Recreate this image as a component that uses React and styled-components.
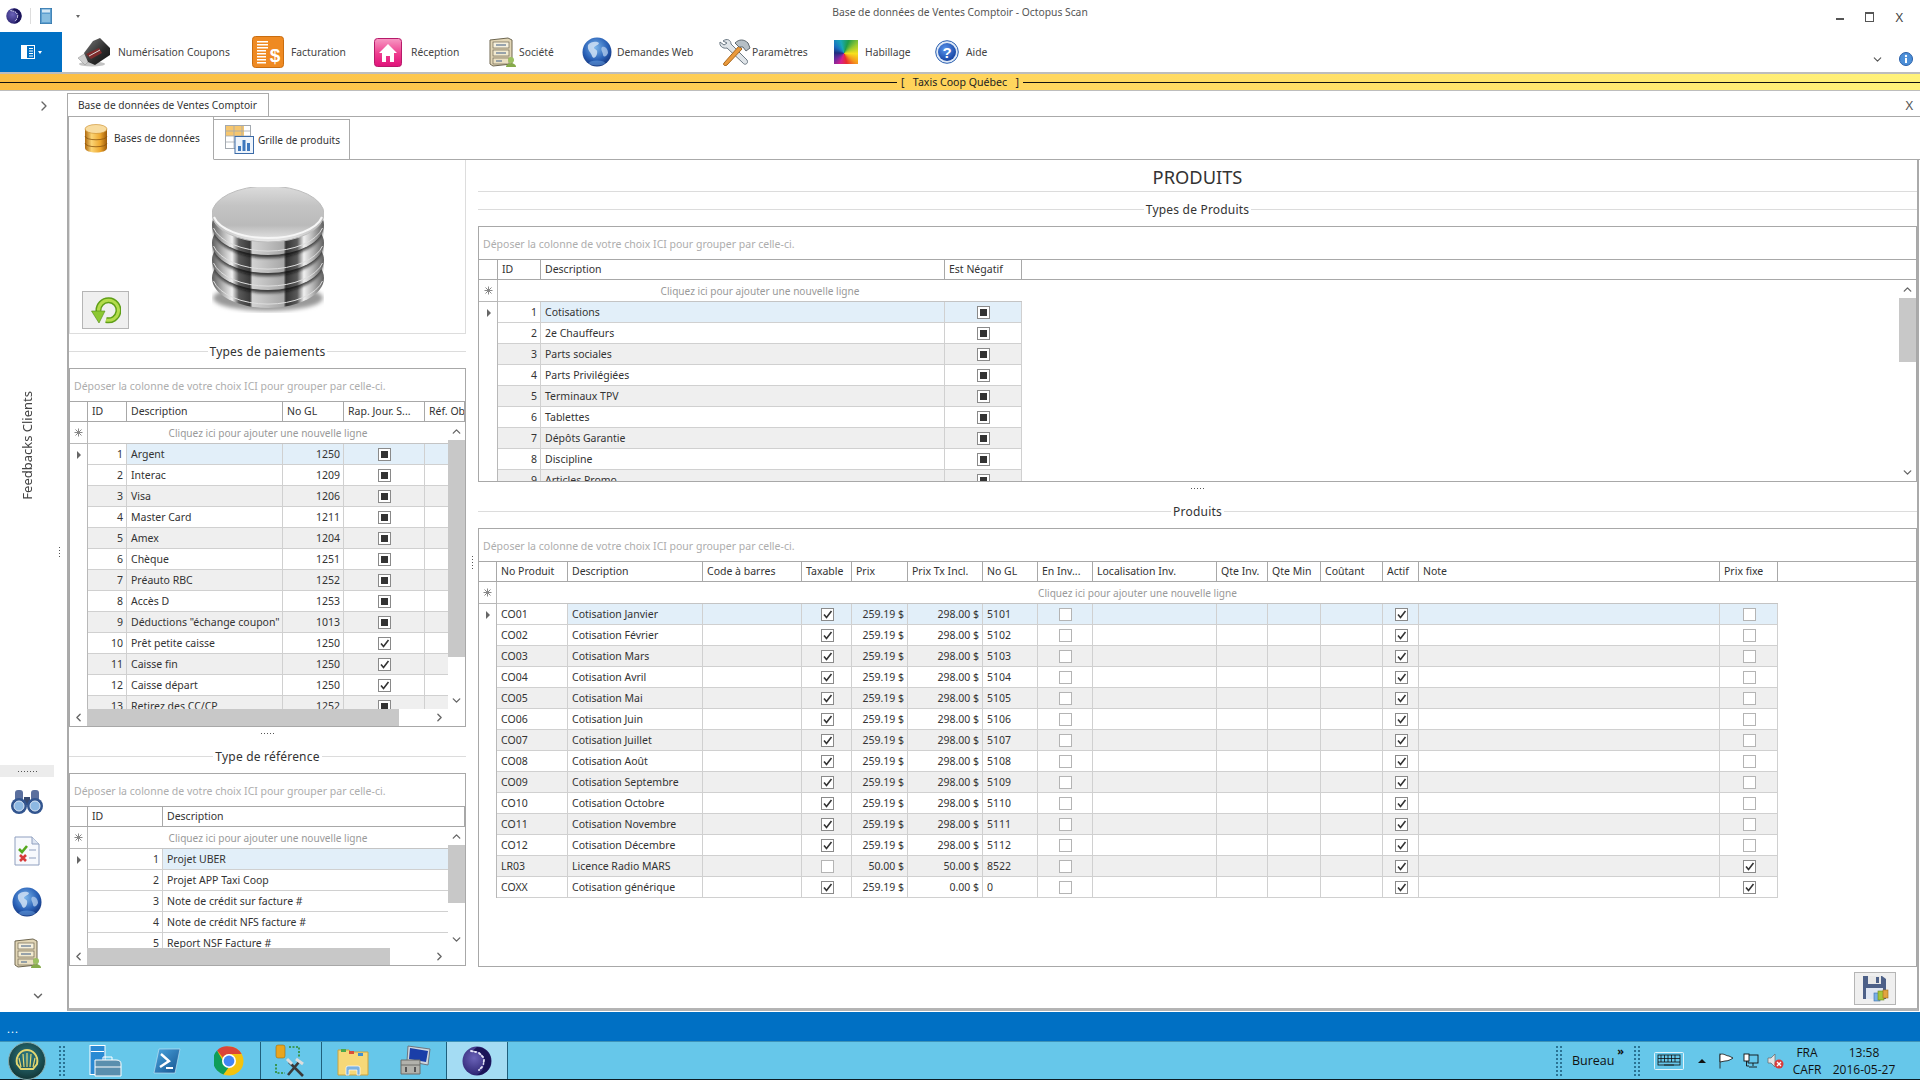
import styled, { createGlobalStyle } from 'styled-components';
import { ChevronUp, ChevronDown, ChevronLeft, ChevronRight } from 'lucide-react';

const GlobalStyle = createGlobalStyle`
  * { box-sizing: border-box; }
  html, body { margin: 0; padding: 0; background: #fff; overflow: hidden; }
  body { font-family: "Noto Sans", "Liberation Sans", sans-serif; font-size: 10.5px; color: #333; }
`;

/* ---------- icons ---------- */

function OctopusIcon({ size = 16 }) {
  return (
    <svg width={size} height={size} viewBox="0 0 30 30">
      <defs>
        <radialGradient id="octo" cx="0.4" cy="0.4" r="0.7">
          <stop offset="0" stopColor="#6a62b8" />
          <stop offset="1" stopColor="#221a66" />
        </radialGradient>
      </defs>
      <circle cx="15" cy="15" r="14.5" fill="url(#octo)" />
      <path d="M15 1 A14 14 0 0 1 15 29 A14 14 0 0 0 22 15 A9 9 0 0 0 9 6 Z" fill="#1a1458" />
      <path d="M9 5 L14 6 M17 7 L21 11 M22 14 L21.5 18 M20 21 L17 24" stroke="#e4e4f6" strokeWidth="1.8" strokeLinecap="round" strokeDasharray="2 2" />
    </svg>
  );
}

function DocIcon() {
  return (
    <svg width="12" height="16" viewBox="0 0 12 16">
      <rect width="12" height="16" fill="#5d9fd0" stroke="#2a6a9e" />
      <rect x="2" y="1.5" width="8" height="3" fill="#d6e8f4" />
      <rect x="2" y="6" width="8" height="8" fill="#88bddf" />
    </svg>
  );
}

function MenuIcon() {
  return (
    <svg width="14" height="14" viewBox="0 0 14 14">
      <rect x="0.5" y="0.5" width="13" height="13" fill="#0070c4" stroke="#fff" />
      <rect x="1" y="1" width="5" height="12" fill="#fff" />
      <path d="M8 3.5 H12 M8 6 H12 M8 8.5 H12 M8 11 H12" stroke="#fff" strokeWidth="1" />
    </svg>
  );
}

function ScannerIcon() {
  return (
    <svg width="32" height="29" viewBox="0 0 32 29">
      <defs>
        <linearGradient id="scanBody" x1="0" y1="0" x2="1" y2="1">
          <stop offset="0" stopColor="#7a7a7a" />
          <stop offset="0.6" stopColor="#2a2a2a" />
          <stop offset="1" stopColor="#101010" />
        </linearGradient>
      </defs>
      <ellipse cx="14" cy="26" rx="13" ry="2.6" fill="#c4c4c4" />
      <path d="M0 20 L9 14 L14 20 L7 27 Z" fill="#cfcfcf" stroke="#8c8c8c" strokeWidth="0.5" />
      <path d="M6 15 L15 3 L22 0 L32 10 L32 17 L17 27 L10 24 Z" fill="url(#scanBody)" />
      <path d="M8 16 L21 10 L24 15 L13 21 Z" fill="#7e2b2c" />
      <path d="M11 18 L22 12" stroke="#d8d8d8" strokeWidth="1" />
    </svg>
  );
}

function InvoiceIcon() {
  return (
    <svg width="32" height="32" viewBox="0 0 32 32">
      <rect x="0.5" y="0.5" width="31" height="31" rx="3" fill="#ef8a22" stroke="#c96d10" />
      {[5, 8, 11, 14, 17, 20, 23, 26].map(y => (
        <rect key={y} x="5" y={y} width={y > 13 ? 9 : 11} height="1.5" fill="#fff" />
      ))}
      <text x="23" y="26" fontSize="19" fontWeight="700" fontFamily="Liberation Sans, sans-serif" fill="#fff" textAnchor="middle">$</text>
    </svg>
  );
}

function HouseIcon() {
  return (
    <svg width="28" height="29" viewBox="0 0 28 29">
      <defs>
        <linearGradient id="pink" x1="0" y1="0" x2="0" y2="1">
          <stop offset="0" stopColor="#f79ac4" />
          <stop offset="0.55" stopColor="#ee3c8e" />
          <stop offset="1" stopColor="#e0127a" />
        </linearGradient>
      </defs>
      <rect x="0.5" y="0.5" width="27" height="28" rx="3" fill="url(#pink)" stroke="#b61a6a" />
      <path d="M14 6 L23 15 L20 15 L20 24 L16 24 L16 18 L12 18 L12 24 L8 24 L8 15 L5 15 Z" fill="#fff" />
    </svg>
  );
}

function CabinetIcon({ width = 28, height = 30 }) {
  return (
    <svg width={width} height={height} viewBox="0 0 28 30">
      <path d="M2 3 L20 1 L24 3 L24 27 L5 29 L2 27 Z" fill="#e2d6b6" stroke="#6e6650" />
      <rect x="5" y="5" width="16" height="6" fill="#f6f0dc" stroke="#6e6650" strokeWidth="0.7" />
      <rect x="5" y="13" width="16" height="6" fill="#f2eacf" stroke="#6e6650" strokeWidth="0.7" />
      <rect x="5" y="21" width="16" height="6" fill="#ebe0c2" stroke="#6e6650" strokeWidth="0.7" />
      <path d="M8 8 H18 M8 16 H18 M8 24 H14" stroke="#7a8a9e" strokeWidth="1.6" />
      <circle cx="23" cy="23" r="3" fill="#9cc060" />
      <path d="M18 30 C18 25 28 25 28 30 Z" fill="#86ab4a" />
    </svg>
  );
}

function GlobeIcon({ size = 30 }) {
  return (
    <svg width={size} height={size} viewBox="0 0 30 30">
      <defs>
        <radialGradient id="globe" cx="0.45" cy="0.35" r="0.75">
          <stop offset="0" stopColor="#7bb5ea" />
          <stop offset="0.55" stopColor="#2a62b8" />
          <stop offset="1" stopColor="#0c2468" />
        </radialGradient>
      </defs>
      <circle cx="15" cy="15" r="14.5" fill="url(#globe)" />
      <path d="M6 8 C9 4 15 4 17 6 C16 9 13 8 12 11 C14 13 16 13 15 17 C14 21 11 22 10 19 C9 15 5 14 6 8 Z" fill="#cfe0f5" opacity="0.85" />
      <path d="M20 10 C23 9 26 12 26 16 C25 19 22 21 21 18 C21 15 18 13 20 10 Z" fill="#b5cfee" opacity="0.75" />
      <ellipse cx="15" cy="26" rx="8" ry="2.5" fill="#6da8e8" opacity="0.5" />
    </svg>
  );
}

function ToolsIcon() {
  return (
    <svg width="32" height="28" viewBox="0 0 32 28">
      <path d="M4 3 C8 0 12 2 12 6 L28 22 C30 25 26 28 24 25 L8 10 C4 11 0 8 1 4 L5 7 L8 5 Z" fill="#dfe4e8" stroke="#6b7883" />
      <path d="M5 25 L20 8 L23 11 L8 27 C6 28.5 3.5 27 5 25 Z" fill="#ea9a3c" stroke="#a8661c" />
      <path d="M16 5 C20 1 25 1 29 5 L31 10 L27 13 L24 9 L20 9 Z" fill="#b5bfc6" stroke="#5d6870" />
    </svg>
  );
}

const PaletteIcon = styled.div`
  width: 24px;
  height: 24px;
  background: conic-gradient(from 20deg at 42% 55%, #1f9c4a, #9ac92e, #f7e01c, #f59a1c, #e92e2e, #d81f8c, #6a2a9e, #1f2f7e, #1a6fc0, #18a8b8, #1f9c4a);
`;

function HelpIcon() {
  return (
    <svg width="24" height="24" viewBox="0 0 24 24">
      <defs>
        <radialGradient id="help" cx="0.4" cy="0.35" r="0.7">
          <stop offset="0" stopColor="#5a96ee" />
          <stop offset="1" stopColor="#123f9e" />
        </radialGradient>
      </defs>
      <circle cx="12" cy="12" r="11.3" fill="#dfe9f6" stroke="#2a5fb0" />
      <circle cx="12" cy="12" r="9" fill="url(#help)" />
      <text x="12" y="17.5" fontSize="15" fontWeight="700" fontFamily="Liberation Sans, sans-serif" fill="#fff" textAnchor="middle">?</text>
    </svg>
  );
}

function InfoIcon() {
  return (
    <svg width="14" height="14" viewBox="0 0 14 14">
      <circle cx="7" cy="7" r="6.5" fill="#4c8fd8" stroke="#2a5fa8" />
      <circle cx="7" cy="4" r="1.2" fill="#fff" />
      <rect x="6" y="6" width="2" height="5" fill="#fff" />
    </svg>
  );
}

function GoldDbIcon() {
  return (
    <svg width="24" height="29" viewBox="0 0 24 29">
      <defs>
        <linearGradient id="gold" x1="0" y1="0" x2="1" y2="0">
          <stop offset="0" stopColor="#b06a10" />
          <stop offset="0.3" stopColor="#fbd474" />
          <stop offset="0.7" stopColor="#eda62c" />
          <stop offset="1" stopColor="#9c5a0a" />
        </linearGradient>
      </defs>
      <path d="M1 5 V24 C1 30 23 30 23 24 V5 Z" fill="url(#gold)" />
      <ellipse cx="12" cy="5" rx="11" ry="4.5" fill="#f8dca0" stroke="#c98a24" strokeWidth="0.6" />
      <path d="M1 12 C1 17 23 17 23 12 M1 19 C1 24 23 24 23 19" fill="none" stroke="#8a540e" strokeWidth="0.8" />
    </svg>
  );
}

function GridChartIcon() {
  return (
    <svg width="29" height="29" viewBox="0 0 29 29">
      <rect x="0.5" y="0.5" width="25" height="23" fill="#fff" stroke="#a3a9b0" />
      <rect x="1" y="1" width="18" height="10" fill="#f6c66e" />
      <path d="M1 6 H25 M1 11 H25 M1 17 H25 M9 1 V23 M17 1 V23" stroke="#a3a9b0" strokeWidth="0.8" />
      <rect x="10" y="11.5" width="18.5" height="17" fill="#eef4fb" stroke="#3b6ba8" />
      <rect x="13" y="21" width="3" height="5" fill="#3f78bd" />
      <rect x="17.5" y="15" width="3" height="11" fill="#3f78bd" />
      <rect x="22" y="18" width="3" height="8" fill="#3f78bd" />
    </svg>
  );
}

function LargeDbIcon() {
  const bands = [91, 73, 56, 38];
  return (
    <svg width="112" height="126" viewBox="0 0 112 126">
      <defs>
        <linearGradient id="metal" x1="0" y1="0" x2="1" y2="0">
          <stop offset="0" stopColor="#5e5e5e" />
          <stop offset="0.1" stopColor="#b4b4b4" />
          <stop offset="0.18" stopColor="#f0f0f0" />
          <stop offset="0.24" stopColor="#5a5a5a" />
          <stop offset="0.34" stopColor="#3a3a3a" />
          <stop offset="0.36" stopColor="#d2d2d2" />
          <stop offset="0.64" stopColor="#a8a8a8" />
          <stop offset="0.66" stopColor="#343434" />
          <stop offset="0.76" stopColor="#5a5a5a" />
          <stop offset="0.82" stopColor="#f0f0f0" />
          <stop offset="0.9" stopColor="#b4b4b4" />
          <stop offset="1" stopColor="#5e5e5e" />
        </linearGradient>
        <linearGradient id="lens" x1="0" y1="0" x2="0" y2="1">
          <stop offset="0" stopColor="#dcdcdc" />
          <stop offset="0.35" stopColor="#c4c4c4" />
          <stop offset="0.7" stopColor="#bababa" />
          <stop offset="1" stopColor="#eaeaea" />
        </linearGradient>
        <filter id="dbBlur"><feGaussianBlur stdDeviation="2" /></filter>
        <filter id="dbEdge"><feGaussianBlur stdDeviation="1.4" /></filter>
      </defs>
      <ellipse cx="56" cy="111" rx="55" ry="13" fill="#999" filter="url(#dbBlur)" />
      {bands.map((c, i) => (
        <g key={c}>
          <ellipse cx="56" cy={c} rx="56" ry="30" fill="url(#metal)" />
          <path d={`M1.5 ${c + 3} A56 30 0 0 0 110.5 ${c + 3}`} fill="none" stroke="#dedede" strokeWidth="1" />
          {i < 3 && <ellipse cx="56" cy={bands[i + 1] + 3} rx="55" ry="30" fill="#111" opacity="0.75" filter="url(#dbEdge)" />}
        </g>
      ))}
      <ellipse cx="56" cy="27" rx="56" ry="28" fill="url(#lens)" stroke="#bdbdbd" />
      <path d="M2 30 A55 26 0 0 0 110 30" fill="none" stroke="#f6f6f6" strokeWidth="2" />
    </svg>
  );
}

function RefreshIcon() {
  return (
    <svg width="30" height="28" viewBox="0 0 30 28">
      <path d="M7.5 15 A 10 10 0 1 1 15 24" fill="none" stroke="#5f9f17" strokeWidth="6" />
      <path d="M7.5 15 A 10 10 0 1 1 15 24" fill="none" stroke="#b4dc4c" strokeWidth="3" />
      <path d="M0.5 15 L14 15 L8 27 Z" fill="#8cc832" stroke="#4f8a10" strokeWidth="0.6" />
    </svg>
  );
}

function BinocularsIcon() {
  return (
    <svg width="32" height="25" viewBox="0 0 32 25">
      <rect x="4" y="0" width="8" height="11" rx="3" fill="#5a6f9e" />
      <rect x="20" y="0" width="8" height="11" rx="3" fill="#5a6f9e" />
      <rect x="13" y="7" width="6" height="8" fill="#37496f" />
      <circle cx="8" cy="16" r="8" fill="#32558f" />
      <circle cx="24" cy="16" r="8" fill="#32558f" />
      <circle cx="8" cy="16" r="5" fill="#8db8e2" stroke="#dbe7f5" />
      <circle cx="24" cy="16" r="5" fill="#8db8e2" stroke="#dbe7f5" />
    </svg>
  );
}

function ChecklistIcon() {
  return (
    <svg width="26" height="30" viewBox="0 0 26 30">
      <path d="M1 1 H18 L25 8 V29 H1 Z" fill="#f7f9fd" stroke="#8f9fbf" />
      <path d="M18 1 V8 H25" fill="#dde5f2" stroke="#8f9fbf" />
      <path d="M5 13 L8 16 L13 10" fill="none" stroke="#54a81f" strokeWidth="2.6" />
      <path d="M6 19 L12 25 M12 19 L6 25" stroke="#d83a3a" strokeWidth="2.6" />
      <path d="M15 14 H22 M15 22 H22" stroke="#8f9fbf" strokeWidth="1" />
    </svg>
  );
}

function SaveIcon() {
  return (
    <svg width="27" height="27" viewBox="0 0 27 27">
      <path d="M1 1 H20 L24 4 V24 H1 Z" fill="#4d6088" />
      <rect x="6" y="1" width="13" height="8" fill="#e8e8e8" />
      <rect x="14" y="2" width="3" height="6" fill="#4d6088" />
      <rect x="4" y="13" width="17" height="11" fill="#dfe6f2" />
      <rect x="12" y="18" width="6" height="8" fill="#7ab0e6" stroke="#3a6ea8" strokeWidth="0.6" />
      <rect x="16" y="16" width="6" height="9" fill="#a6c73a" stroke="#6a8a1a" strokeWidth="0.6" />
      <rect x="21" y="15" width="5" height="8" fill="#e2a440" stroke="#a06a18" strokeWidth="0.6" />
    </svg>
  );
}

function ShellIcon() {
  return (
    <svg width="38" height="38" viewBox="0 0 38 38">
      <defs>
        <radialGradient id="orb" cx="0.5" cy="0.4" r="0.65">
          <stop offset="0" stopColor="#2f7f8a" />
          <stop offset="1" stopColor="#10302f" />
        </radialGradient>
      </defs>
      <circle cx="19" cy="19" r="18.5" fill="url(#orb)" stroke="#8aa" />
      <path d="M9 22 C7 13 14 8 19 8 C24 8 31 13 29 22 L25 27 H13 Z" fill="none" stroke="#e4d770" strokeWidth="2" />
      <path d="M13 25 L11 16 M16 25 L15 12 M19 25 V11 M22 25 L23 12 M25 25 L27 16" stroke="#e4d770" strokeWidth="1.2" />
    </svg>
  );
}

function ServerCaseIcon() {
  return (
    <svg width="33" height="32" viewBox="0 0 33 32">
      <rect x="1" y="0.5" width="15" height="29" fill="#2a8ad4" stroke="#fff" />
      <rect x="2" y="6" width="13" height="1" fill="#fff" />
      <path d="M6 15 H27 Q32 15 32 19 V31 H6 Z" fill="#5a8fae" stroke="#fff" />
      <path d="M6 22 H32 M14 15 V12 H23 V15" stroke="#fff" fill="none" />
    </svg>
  );
}

function PowerShellIcon() {
  return (
    <svg width="28" height="26" viewBox="0 0 28 26">
      <defs>
        <linearGradient id="ps" x1="0" y1="0" x2="1" y2="1">
          <stop offset="0" stopColor="#4ba6e0" />
          <stop offset="1" stopColor="#14528e" />
        </linearGradient>
      </defs>
      <path d="M6 1 H27 L22 25 H1 Z" fill="url(#ps)" stroke="#cfe6f5" strokeWidth="0.6" />
      <path d="M8 6 L16 13 L7 19" fill="none" stroke="#fff" strokeWidth="2.4" />
      <path d="M13 20 H20" stroke="#fff" strokeWidth="2" />
    </svg>
  );
}

function ChromeIcon() {
  return (
    <svg width="30" height="30" viewBox="0 0 30 30">
      <circle cx="15" cy="15" r="14.5" fill="#f4c20d" />
      <path d="M15 0.5 A14.5 14.5 0 0 1 27.6 8 L15 8 A7 7 0 0 0 8.9 11.5 L3 4.5 A14.5 14.5 0 0 1 15 0.5 Z" fill="#db4437" />
      <path d="M3 4.5 L9 15 A6 6 0 0 0 15 21 L9.4 28.4 A14.5 14.5 0 0 1 3 4.5 Z" fill="#0f9d58" />
      <circle cx="15" cy="15" r="7" fill="#fff" />
      <circle cx="15" cy="15" r="5.4" fill="#4285f4" />
    </svg>
  );
}

function DbToolsIcon() {
  return (
    <svg width="32" height="33" viewBox="0 0 32 33">
      <rect x="1" y="1" width="9" height="13" rx="2" fill="#e8a51f" stroke="#9a6a10" strokeWidth="0.6" />
      <path d="M14 3 H24 V14 M1 20 V29 H10" fill="none" stroke="#2e8a2e" strokeWidth="1.6" strokeDasharray="2 1.5" />
      <path d="M13 31 L24 18 M14 18 L28 32" stroke="#3a3a3a" strokeWidth="2.6" />
      <path d="M12 15 L17 20 M21 15 L28 20" stroke="#ddd" strokeWidth="3" />
    </svg>
  );
}

function FolderIcon() {
  return (
    <svg width="32" height="30" viewBox="0 0 32 30">
      <path d="M1 4 H12 L14 6 H31 V29 H1 Z" fill="#f6d878" stroke="#c9a23e" />
      <rect x="4" y="3" width="5" height="3" fill="#4ca84c" />
      <rect x="12" y="5" width="5" height="3" fill="#d94d3a" />
      <rect x="21" y="7" width="5" height="3" fill="#3f8fd0" />
      <path d="M9 29 V22 Q9 20 11 20 H21 Q23 20 23 22 V29 H20 V24 H12 V29 Z" fill="#7cb1df" stroke="#fff" strokeWidth="0.7" />
    </svg>
  );
}

function ComputerIcon() {
  return (
    <svg width="31" height="33" viewBox="0 0 31 33">
      <path d="M8 2 L30 5 L28 21 L7 17 Z" fill="#cfd6de" stroke="#6d7680" />
      <path d="M10 4 L28 7 L26 18 L9 15 Z" fill="#1a3ea8" />
      <path d="M1 16 H20 V30 H1 Z" fill="#b2b2ac" stroke="#6d6d68" />
      <path d="M1 21 H20" stroke="#6d6d68" />
      <rect x="5" y="23" width="2" height="5" fill="#555" />
      <rect x="14" y="23" width="2" height="5" fill="#555" />
    </svg>
  );
}

function KeyboardIcon() {
  return (
    <svg width="30" height="18" viewBox="0 0 30 18" fill="none" stroke="#111" strokeWidth="0.8">
      <rect x="0.5" y="0.5" width="29" height="17" rx="1" stroke="#fff" fill="#66c7ea" />
      <rect x="4" y="3" width="22" height="10" />
      <path d="M4 6.5 H26 M4 10 H26 M7 3 V10 M10.5 3 V10 M14 3 V10 M17.5 3 V10 M21 3 V10 M10 13 H20" />
    </svg>
  );
}

function FlagIcon() {
  return (
    <svg width="16" height="16" viewBox="0 0 16 16" fill="#fff" stroke="#222" strokeWidth="0.9">
      <path d="M2 0.5 V15.5" />
      <path d="M2 1.5 C6 0 8 3 11 3 L15 5 C12 7 10 8 7 8 L2 9 Z" />
    </svg>
  );
}

function NetworkIcon() {
  return (
    <svg width="16" height="16" viewBox="0 0 16 16" fill="#66c7ea" stroke="#111" strokeWidth="0.9">
      <rect x="5" y="2" width="10" height="8" />
      <rect x="1" y="1" width="5" height="7" fill="#fff" />
      <path d="M10 10 V13 M6 14 H14 M3.5 8 V13 H6" />
    </svg>
  );
}

function SoundIcon() {
  return (
    <svg width="17" height="16" viewBox="0 0 17 16">
      <path d="M1 5 H4 L8 1 V14 L4 10 H1 Z" fill="#e4e4e4" stroke="#666" strokeWidth="0.7" />
      <circle cx="12" cy="11" r="4.5" fill="#d83b3b" />
      <path d="M10 9 L14 13 M14 9 L10 13" stroke="#fff" strokeWidth="1.3" />
    </svg>
  );
}

function CheckMark() {
  return (
    <svg width="11" height="11" viewBox="0 0 11 11">
      <path d="M2 5.5 L4.5 8.5 L9.5 2" fill="none" stroke="#333" strokeWidth="1.6" />
    </svg>
  );
}

function NewRowMark() {
  return (
    <svg width="9" height="9" viewBox="0 0 9 9" stroke="#888" strokeWidth="1">
      <path d="M4.5 0.5 V8.5 M0.5 4.5 H8.5 M1.5 1.5 L7.5 7.5 M7.5 1.5 L1.5 7.5" />
    </svg>
  );
}

/* ---------- window chrome ---------- */

const Page = styled.div`
  width: 1920px;
  height: 1080px;
  display: flex;
  flex-direction: column;
  overflow: hidden;
  background: #fff;
`;

const TitleBar = styled.div`
  height: 32px;
  display: grid;
  grid-template-columns: 1fr auto 1fr;
`;

const QuickBar = styled.div`
  display: flex;
  align-items: center;
  padding: 0 0 0 6px;
  gap: 8px;
`;

const QuickDivider = styled.span`
  width: 1px;
  height: 16px;
  background: #ddd;
  margin-right: 1px;
`;

const QuickArrow = styled.span`
  margin-left: 16px;
  width: 0;
  height: 0;
  border-left: 2.5px solid transparent;
  border-right: 2.5px solid transparent;
  border-top: 3px solid #666;
`;

const WindowTitle = styled.div`
  padding-top: 5px;
  font-size: 10.3px;
  color: #555;
`;

const WindowControls = styled.div`
  display: flex;
  justify-content: flex-end;
  align-items: center;
  padding: 2px 17px 0 0;
  gap: 21px;
  color: #444;
  font-size: 13px;
`;

const MinButton = styled.span`
  width: 8px;
  height: 2px;
  background: #555;
  margin-top: 4px;
`;

const MaxButton = styled.span`
  width: 9px;
  height: 10px;
  border: 1px solid #555;
  border-top-width: 2px;
`;

const Ribbon = styled.div`
  height: 42px;
  display: flex;
  border-bottom: 2px solid #bdbdbd;
`;

const AppMenu = styled.div`
  width: 62px;
  background: #0070c4;
  display: flex;
  align-items: center;
  justify-content: center;
  gap: 3px;
`;

const MenuCaret = styled.span`
  width: 0;
  height: 0;
  border-left: 2.5px solid transparent;
  border-right: 2.5px solid transparent;
  border-top: 3px solid #fff;
`;

const RibbonItems = styled.div`
  display: flex;
  padding-left: 16px;
`;

const RibbonItem = styled.div`
  width: ${p => p.$width}px;
  display: flex;
  align-items: center;
  gap: ${p => p.$gap}px;
  font-size: 10.3px;
  color: #444;
  white-space: nowrap;
`;

const RibbonEnd = styled.div`
  margin-left: auto;
  display: flex;
  align-items: center;
  gap: 15px;
  padding: 14px 7px 0 0;
  color: #555;
`;

const BrandBar = styled.div`
  height: 17px;
  display: flex;
  align-items: center;
  gap: 4px;
  background: linear-gradient(90deg, #fbbd42 0%, #ffd45c 50%, #fff27a 100%);
  border-bottom: 1px solid #bdbdbd;
  font-size: 10.6px;
  color: #222;
`;

const BrandRule = styled.span`
  flex: 1;
  height: 1px;
  background: #111;
`;

const BrandName = styled.span`
  white-space: pre;
`;

const Workspace = styled.div`
  flex: 1;
  min-height: 0;
  display: flex;
`;

/* ---------- side rail ---------- */

const Sidebar = styled.div`
  width: 67px;
  display: flex;
`;

const SideColumn = styled.div`
  width: 54px;
  display: flex;
  flex-direction: column;
  align-items: center;
`;

const SideToggle = styled.div`
  align-self: stretch;
  height: 30px;
  display: flex;
  align-items: center;
  justify-content: flex-end;
  margin-right: 2px;
  color: #666;
`;

const Feedback = styled.div`
  height: 644px;
  padding-top: 5px;
  display: flex;
  align-items: center;
`;

const FeedbackLabel = styled.span`
  writing-mode: vertical-rl;
  transform: rotate(180deg);
  font-size: 13px;
  color: #444;
`;

const SideGrip = styled.div`
  align-self: stretch;
  height: 12px;
  background: #ececec;
  display: flex;
  align-items: center;
  justify-content: center;
`;

const SideIcons = styled.div`
  display: flex;
  flex-direction: column;
  align-items: center;
  gap: 21px;
  padding-top: 13px;
`;

const SideMore = styled.div`
  align-self: flex-end;
  margin: 21px 9px 0 0;
  color: #666;
  line-height: 0;
`;

const SideSplitter = styled.div`
  width: 13px;
  padding-right: 3px;
  display: flex;
  align-items: center;
  justify-content: center;
`;

const Dots = styled.span`
  display: block;
  width: ${p => (p.$vertical ? 2 : p.$count * 3)}px;
  height: ${p => (p.$vertical ? p.$count * 3 : 2)}px;
  background-image: radial-gradient(#555 0.8px, transparent 1px);
  background-size: 3px 3px;
`;

/* ---------- document area ---------- */

const Document = styled.div`
  flex: 1;
  min-width: 0;
  display: flex;
  flex-direction: column;
`;

const DocTabs = styled.div`
  height: 26px;
  padding-top: 2px;
  display: flex;
  align-items: stretch;
  justify-content: space-between;
  border-bottom: 1px solid #aaa;
`;

const DocTab = styled.div`
  width: 202px;
  display: flex;
  align-items: center;
  padding-left: 10px;
  border: 1px solid #aaa;
  border-bottom: 0;
  font-size: 10.2px;
  color: #333;
`;

const DocClose = styled.span`
  align-self: center;
  padding-right: 7px;
  font-size: 13px;
  color: #555;
`;

const SubTabs = styled.div`
  height: 43px;
  display: flex;
  align-items: flex-end;
  border-left: 2px solid #aaa;
  box-shadow: inset 0 -1px 0 #aaa;
`;

const SubTab = styled.div`
  height: ${p => (p.$active ? 43 : 41)}px;
  width: ${p => p.$width}px;
  display: flex;
  align-items: center;
  gap: ${p => p.$gap}px;
  padding-left: ${p => p.$pad}px;
  border-right: 1px solid #aaa;
  border-top: ${p => (p.$active ? 0 : '1px solid #aaa')};
  border-bottom: ${p => (p.$active ? '1px solid #fff' : '1px solid #aaa')};
  background: #fff;
  font-size: 10.1px;
  color: #333;
`;

const Frame = styled.div`
  flex: 1;
  min-height: 0;
  display: flex;
  margin: 0 1px 1px 0;
  border-left: 2px solid #aaa;
  border-right: 2px solid #aaa;
  border-bottom: 3px solid #b4b4b4;
`;

const LeftPane = styled.div`
  width: 397px;
  display: flex;
  flex-direction: column;
`;

const PaneGutter = styled.div`
  width: 12px;
  display: flex;
  align-items: center;
  justify-content: center;
  padding-bottom: 44px;
`;

const RightPane = styled.div`
  flex: 1;
  min-width: 0;
  display: flex;
  flex-direction: column;
`;

const DbPanel = styled.div`
  height: 174px;
  display: grid;
  border: 1px solid #ddd;
  border-top: 0;
`;

const DbPicture = styled.div`
  grid-area: 1 / 1;
  justify-self: center;
  align-self: start;
  margin-top: 27px;
  line-height: 0;
`;

const RefreshButton = styled.div`
  grid-area: 1 / 1;
  justify-self: start;
  align-self: end;
  margin: 0 0 4px 12px;
  width: 47px;
  height: 38px;
  background: #efefef;
  border: 1px solid #b5b5b5;
  display: flex;
  align-items: center;
  justify-content: center;
`;

const PageHeading = styled.div`
  height: 32px;
  border-bottom: 1px solid #dcdcdc;
  text-align: center;
  font-size: 18.3px;
  line-height: 34px;
  color: #333;
`;

const SectionTitle = styled.div`
  height: 34px;
  display: flex;
  align-items: center;
  gap: 2px;
  font-size: 12px;
  color: #333;
  letter-spacing: 0.2px;
  &::before, &::after {
    content: '';
    flex: 1;
    height: 1px;
    background: #dcdcdc;
  }
`;

const PaneSplitter = styled.div`
  height: 12px;
  display: flex;
  align-items: center;
  justify-content: center;
`;

const PaneFooter = styled.div`
  flex: 1;
  display: flex;
  justify-content: flex-end;
  padding: 5px 21px 0 0;
`;

const SaveButton = styled.div`
  width: 42px;
  height: 33px;
  background: #efefef;
  border: 1px solid #b5b5b5;
  display: flex;
  align-items: center;
  justify-content: center;
`;

/* ---------- data grid ---------- */

const GridFrame = styled.div`
  height: ${p => p.$height}px;
  display: flex;
  flex-direction: column;
  border: 1px solid #a8a8a8;
  overflow: hidden;
`;

const GroupPanel = styled.div`
  height: 33px;
  flex: none;
  display: flex;
  align-items: center;
  padding: 1px 0 0 4px;
  border-bottom: 1px solid #a8a8a8;
  color: #adadad;
  white-space: nowrap;
`;

const GridRow = styled.div`
  display: grid;
  grid-template-columns: ${p => p.$cols};
  height: ${p => p.$height}px;
  flex: none;
  white-space: nowrap;
`;

const HeaderCell = styled.div`
  display: flex;
  align-items: center;
  padding: 0 0 2px 4px;
  overflow: hidden;
  border-right: 1px solid #a8a8a8;
  border-bottom: 1px solid #a8a8a8;
  color: #333;
`;

const HeaderFill = styled.div`
  border-bottom: 1px solid #a8a8a8;
`;

const GridMain = styled.div`
  flex: 1;
  min-height: 0;
  display: flex;
`;

const Viewport = styled.div`
  flex: 1;
  min-width: 0;
  overflow: hidden;
`;

const NewRow = styled.div`
  display: flex;
  height: 22px;
`;

const Indicator = styled.div`
  display: flex;
  align-items: center;
  justify-content: center;
  border-right: 1px solid #b8b8b8;
  background: #fff;
  ${p => (p.$width ? `width: ${p.$width}px; border-bottom: 1px solid #b8b8b8;` : '')}
`;

const NewRowText = styled.div`
  width: ${p => p.$width}px;
  display: flex;
  align-items: center;
  justify-content: center;
  border-bottom: 1px solid #c4c4c4;
  color: #999;
  font-size: 10.1px;
`;

const RowPointer = styled.span`
  width: 0;
  height: 0;
  margin-left: 1px;
  border-top: 4px solid transparent;
  border-bottom: 4px solid transparent;
  border-left: 4px solid #666;
`;

const Cell = styled.div`
  display: flex;
  align-items: center;
  justify-content: ${p => (p.$align === 'right' ? 'flex-end' : p.$align === 'center' ? 'center' : 'flex-start')};
  padding: 0 3px 0 4px;
  overflow: hidden;
  border-right: 1px solid #d0d0d0;
  border-bottom: 1px solid #d0d0d0;
  background: ${p => p.$bg};
  color: #333;
`;

const CheckBox = styled.span`
  width: 13px;
  height: 13px;
  display: flex;
  align-items: center;
  justify-content: center;
  border: 1px solid ${p => (p.$state === 'off' ? '#b4b4b4' : '#8a8a8a')};
  background: #fff;
`;

const Mixed = styled.span`
  width: 7px;
  height: 7px;
  background: #333;
`;

const VScroll = styled.div`
  width: 17px;
  flex: none;
  display: flex;
  flex-direction: column;
`;

const ScrollArrow = styled.div`
  height: 18px;
  flex: none;
  display: flex;
  align-items: center;
  justify-content: center;
  color: #666;
`;

const ScrollTrack = styled.div`
  flex: 1;
  min-height: 0;
`;

const VThumb = styled.div`
  height: ${p => p.$size}px;
  background: #c8c8c8;
`;

const HScroll = styled.div`
  height: 17px;
  flex: none;
  display: flex;
`;

const HArrow = styled.div`
  width: 17px;
  flex: none;
  display: flex;
  align-items: center;
  justify-content: center;
  color: #666;
`;

const HTrack = styled.div`
  flex: 1;
`;

const HThumb = styled.div`
  height: 100%;
  width: ${p => p.$size}px;
  background: #c8c8c8;
`;

const HCorner = styled.div`
  width: 17px;
  flex: none;
`;

const toneColors = { plain: '#fff', alt: '#efefef', sel: '#e2eff9' };

function rowTone(index, striped) {
  if (index === 0) return 'sel';
  if (striped && index % 2 === 0) return 'alt';
  return 'plain';
}

function CellValue({ column, value }) {
  if (column.check) {
    return (
      <CheckBox $state={value}>
        {value === 'on' && <CheckMark />}
        {value === 'mixed' && <Mixed />}
      </CheckBox>
    );
  }
  return value;
}

function DataGrid({ height, columns, rows, newWidth, striped = true, vThumb, hThumb }) {
  const cols = columns.map(c => c.w + 'px').join(' ') + ' 1fr';
  return (
    <GridFrame $height={height}>
      <GroupPanel>Déposer la colonne de votre choix ICI pour grouper par celle-ci.</GroupPanel>
      <GridRow $cols={cols} $height={20}>
        {columns.map((c, i) => <HeaderCell key={i}>{c.label}</HeaderCell>)}
        <HeaderFill />
      </GridRow>
      <GridMain>
        <Viewport>
          <NewRow>
            <Indicator $width={columns[0].w}><NewRowMark /></Indicator>
            <NewRowText $width={newWidth}>Cliquez ici pour ajouter une nouvelle ligne</NewRowText>
          </NewRow>
          {rows.map((row, r) => {
            const tone = rowTone(r, striped);
            return (
              <GridRow key={r} $cols={cols} $height={21}>
                <Indicator>{r === 0 && <RowPointer />}</Indicator>
                {row.map((value, i) => (
                  <Cell
                    key={i}
                    $align={columns[i + 1].check ? 'center' : columns[i + 1].align}
                    $bg={tone === 'sel' && i === 0 ? '#fff' : toneColors[tone]}
                  >
                    <CellValue column={columns[i + 1]} value={value} />
                  </Cell>
                ))}
              </GridRow>
            );
          })}
        </Viewport>
        {vThumb && (
          <VScroll>
            <ScrollArrow><ChevronUp size={13} strokeWidth={2.5} /></ScrollArrow>
            <ScrollTrack><VThumb $size={vThumb} /></ScrollTrack>
            <ScrollArrow><ChevronDown size={13} strokeWidth={2.5} /></ScrollArrow>
          </VScroll>
        )}
      </GridMain>
      {hThumb && (
        <HScroll>
          <HArrow><ChevronLeft size={13} strokeWidth={2.5} /></HArrow>
          <HTrack><HThumb $size={hThumb} /></HTrack>
          <HArrow><ChevronRight size={13} strokeWidth={2.5} /></HArrow>
          <HCorner />
        </HScroll>
      )}
    </GridFrame>
  );
}

/* ---------- status + taskbar ---------- */

const StatusBar = styled.div`
  height: 29px;
  background: #0070c4;
  color: #fff;
  padding: 9px 0 0 7px;
  font-size: 11px;
  letter-spacing: 1px;
`;

const Taskbar = styled.div`
  height: 39px;
  display: flex;
  background: #66c7ea;
  border-top: 1px solid #3f93b8;
  border-bottom: 1px solid #0c1c24;
  font-family: "Open Sans", "Noto Sans", sans-serif;
  color: #111;
`;

const StartOrb = styled.div`
  width: 54px;
  display: flex;
  align-items: center;
  justify-content: center;
`;

const Grip = styled.span`
  width: ${p => p.$width}px;
  margin: 3px ${p => p.$right}px 3px ${p => p.$left}px;
  background-image: radial-gradient(#2a7394 1px, transparent 1.1px);
  background-size: 4px 4px;
`;

const TaskButton = styled.div`
  width: 62px;
  display: flex;
  align-items: center;
  justify-content: center;
  background: ${p => (p.$open ? '#a4dcf3' : 'transparent')};
  border-left: ${p => (p.$pinned || p.$open ? '1px solid #1f5f7c' : '1px solid transparent')};
  border-right: ${p => (p.$pinned || p.$open ? '1px solid #1f5f7c' : '1px solid transparent')};
`;

const Tray = styled.div`
  margin-left: auto;
  display: flex;
  align-items: stretch;
  padding-right: 18px;
`;

const Toolbar = styled.div`
  width: 68px;
  padding-left: 9px;
  display: flex;
  align-items: center;
  justify-content: space-between;
  font-size: 12.5px;
`;

const ToolbarMore = styled.span`
  align-self: flex-start;
  margin: 3px 7px 0 0;
  font-size: 11px;
  font-weight: 700;
  line-height: 1;
`;

const TrayKeyboard = styled.div`
  margin-left: 13px;
  display: flex;
  align-items: center;
  line-height: 0;
`;

const TrayCaret = styled.div`
  width: 23px;
  margin-left: 6px;
  display: flex;
  align-items: center;
  justify-content: center;
  &::before {
    content: '';
    border-left: 4px solid transparent;
    border-right: 4px solid transparent;
    border-bottom: 4px solid #111;
  }
`;

const TrayIcon = styled.div`
  width: 25px;
  display: flex;
  align-items: center;
  justify-content: center;
`;

const TrayStack = styled.div`
  width: ${p => p.$width}px;
  display: flex;
  flex-direction: column;
  align-items: center;
  justify-content: center;
  font-size: 12px;
  line-height: 17px;
`;

/* ---------- data ---------- */

const payColumns = [
  { w: 18 },
  { w: 39, label: 'ID', align: 'right' },
  { w: 156, label: 'Description' },
  { w: 61, label: 'No GL', align: 'right' },
  { w: 81, label: 'Rap. Jour. S...', check: true },
  { w: 40, label: 'Réf. Obligatoire' },
];

const payRows = [
  [1, 'Argent', 1250, 'mixed', ''],
  [2, 'Interac', 1209, 'mixed', ''],
  [3, 'Visa', 1206, 'mixed', ''],
  [4, 'Master Card', 1211, 'mixed', ''],
  [5, 'Amex', 1204, 'mixed', ''],
  [6, 'Chèque', 1251, 'mixed', ''],
  [7, 'Préauto RBC', 1252, 'mixed', ''],
  [8, 'Accès D', 1253, 'mixed', ''],
  [9, 'Déductions "échange coupon"', 1013, 'mixed', ''],
  [10, 'Prêt petite caisse', 1250, 'on', ''],
  [11, 'Caisse fin', 1250, 'on', ''],
  [12, 'Caisse départ', 1250, 'on', ''],
  [13, 'Retirez des CC/CP', 1252, 'mixed', ''],
];

const refColumns = [
  { w: 18 },
  { w: 75, label: 'ID', align: 'right' },
  { w: 302, label: 'Description' },
];

const refRows = [
  [1, 'Projet UBER'],
  [2, 'Projet APP Taxi Coop'],
  [3, 'Note de crédit sur facture #'],
  [4, 'Note de crédit NFS facture #'],
  [5, 'Report NSF Facture #'],
];

const typeColumns = [
  { w: 19 },
  { w: 43, label: 'ID', align: 'right' },
  { w: 404, label: 'Description' },
  { w: 77, label: 'Est Négatif', check: true },
];

const typeRows = [
  [1, 'Cotisations', 'mixed'],
  [2, '2e Chauffeurs', 'mixed'],
  [3, 'Parts sociales', 'mixed'],
  [4, 'Parts Privilégiées', 'mixed'],
  [5, 'Terminaux TPV', 'mixed'],
  [6, 'Tablettes', 'mixed'],
  [7, 'Dépôts Garantie', 'mixed'],
  [8, 'Discipline', 'mixed'],
  [9, 'Articles Promo', 'mixed'],
];

const productColumns = [
  { w: 18 },
  { w: 71, label: 'No Produit' },
  { w: 135, label: 'Description' },
  { w: 99, label: 'Code à barres' },
  { w: 50, label: 'Taxable', check: true },
  { w: 56, label: 'Prix', align: 'right' },
  { w: 75, label: 'Prix Tx Incl.', align: 'right' },
  { w: 55, label: 'No GL' },
  { w: 55, label: 'En Inv...', check: true },
  { w: 124, label: 'Localisation Inv.' },
  { w: 51, label: 'Qte Inv.' },
  { w: 53, label: 'Qte Min' },
  { w: 62, label: 'Coûtant' },
  { w: 36, label: 'Actif', check: true },
  { w: 301, label: 'Note' },
  { w: 58, label: 'Prix fixe', check: true },
];

function product(code, name, taxable, price, total, gl, fixed) {
  return [code, name, '', taxable, price, total, gl, 'off', '', '', '', '', 'on', '', fixed];
}

const productRows = [
  ['CO01', 'Janvier', 5101], ['CO02', 'Février', 5102], ['CO03', 'Mars', 5103],
  ['CO04', 'Avril', 5104], ['CO05', 'Mai', 5105], ['CO06', 'Juin', 5106],
  ['CO07', 'Juillet', 5107], ['CO08', 'Août', 5108], ['CO09', 'Septembre', 5109],
  ['CO10', 'Octobre', 5110], ['CO11', 'Novembre', 5111], ['CO12', 'Décembre', 5112],
].map(([code, month, gl]) => product(code, `Cotisation ${month}`, 'on', '259.19 $', '298.00 $', gl, 'off'));

productRows.push(product('LR03', 'Licence Radio MARS', 'off', '50.00 $', '50.00 $', 8522, 'on'));
productRows.push(product('COXX', 'Cotisation générique', 'on', '259.19 $', '0.00 $', 0, 'on'));

export default function App() {
  return (
    <Page>
      <GlobalStyle />
      <TitleBar>
        <QuickBar>
          <OctopusIcon />
          <QuickDivider />
          <DocIcon />
          <QuickArrow />
        </QuickBar>
        <WindowTitle>Base de données de Ventes Comptoir - Octopus Scan</WindowTitle>
        <WindowControls>
          <MinButton />
          <MaxButton />
          <span>X</span>
        </WindowControls>
      </TitleBar>

      <Ribbon>
        <AppMenu><MenuIcon /><MenuCaret /></AppMenu>
        <RibbonItems>
          <RibbonItem $width={174} $gap={8}><ScannerIcon />Numérisation Coupons</RibbonItem>
          <RibbonItem $width={122} $gap={7}><InvoiceIcon />Facturation</RibbonItem>
          <RibbonItem $width={114} $gap={9}><HouseIcon />Réception</RibbonItem>
          <RibbonItem $width={94} $gap={3}><CabinetIcon />Société</RibbonItem>
          <RibbonItem $width={137} $gap={5}><GlobeIcon />Demandes Web</RibbonItem>
          <RibbonItem $width={115} $gap={1}><ToolsIcon />Paramètres</RibbonItem>
          <RibbonItem $width={101} $gap={7}><PaletteIcon />Habillage</RibbonItem>
          <RibbonItem $width={60} $gap={7}><HelpIcon />Aide</RibbonItem>
        </RibbonItems>
        <RibbonEnd>
          <ChevronDown size={13} />
          <InfoIcon />
        </RibbonEnd>
      </Ribbon>

      <BrandBar>
        <BrandRule />
        <BrandName>[   Taxis Coop Québec   ]</BrandName>
        <BrandRule />
      </BrandBar>

      <Workspace>
        <Sidebar>
          <SideColumn>
            <SideToggle><ChevronRight size={16} /></SideToggle>
            <Feedback><FeedbackLabel>Feedbacks Clients</FeedbackLabel></Feedback>
            <SideGrip><Dots $count={7} /></SideGrip>
            <SideIcons>
              <BinocularsIcon />
              <ChecklistIcon />
              <GlobeIcon />
              <CabinetIcon />
            </SideIcons>
            <SideMore><ChevronDown size={14} strokeWidth={2.5} /></SideMore>
          </SideColumn>
          <SideSplitter><Dots $vertical $count={4} /></SideSplitter>
        </Sidebar>

        <Document>
          <DocTabs>
            <DocTab>Base de données de Ventes Comptoir</DocTab>
            <DocClose>X</DocClose>
          </DocTabs>
          <SubTabs>
            <SubTab $active $width={145} $gap={6} $pad={15}><GoldDbIcon />Bases de données</SubTab>
            <SubTab $width={136} $gap={4} $pad={11}><GridChartIcon />Grille de produits</SubTab>
          </SubTabs>
          <Frame>
            <LeftPane>
              <DbPanel>
                <DbPicture><LargeDbIcon /></DbPicture>
                <RefreshButton><RefreshIcon /></RefreshButton>
              </DbPanel>
              <SectionTitle>Types de paiements</SectionTitle>
              <DataGrid height={359} columns={payColumns} rows={payRows} newWidth={360} vThumb={217} hThumb={312} />
              <PaneSplitter><Dots $count={5} /></PaneSplitter>
              <SectionTitle>Type de référence</SectionTitle>
              <DataGrid height={193} columns={refColumns} rows={refRows} newWidth={360} striped={false} vThumb={58} hThumb={303} />
            </LeftPane>
            <PaneGutter><Dots $vertical $count={5} /></PaneGutter>
            <RightPane>
              <PageHeading>PRODUITS</PageHeading>
              <SectionTitle>Types de Produits</SectionTitle>
              <DataGrid height={256} columns={typeColumns} rows={typeRows} newWidth={524} vThumb={64} />
              <PaneSplitter><Dots $count={5} /></PaneSplitter>
              <SectionTitle>Produits</SectionTitle>
              <DataGrid height={439} columns={productColumns} rows={productRows} newWidth={1281} />
              <PaneFooter>
                <SaveButton><SaveIcon /></SaveButton>
              </PaneFooter>
            </RightPane>
          </Frame>
        </Document>
      </Workspace>

      <StatusBar>...</StatusBar>

      <Taskbar>
        <StartOrb><ShellIcon /></StartOrb>
        <Grip $width={8} $left={4} $right={8} />
        <TaskButton><ServerCaseIcon /></TaskButton>
        <TaskButton><PowerShellIcon /></TaskButton>
        <TaskButton><ChromeIcon /></TaskButton>
        <TaskButton $pinned><DbToolsIcon /></TaskButton>
        <TaskButton><FolderIcon /></TaskButton>
        <TaskButton><ComputerIcon /></TaskButton>
        <TaskButton $open><OctopusIcon size={30} /></TaskButton>
        <Tray>
          <Grip $width={8} $left={0} $right={0} />
          <Toolbar>Bureau<ToolbarMore>»</ToolbarMore></Toolbar>
          <Grip $width={8} $left={2} $right={0} />
          <TrayKeyboard><KeyboardIcon /></TrayKeyboard>
          <TrayCaret />
          <TrayIcon><FlagIcon /></TrayIcon>
          <TrayIcon><NetworkIcon /></TrayIcon>
          <TrayIcon><SoundIcon /></TrayIcon>
          <TrayStack $width={38}><span>FRA</span><span>CAFR</span></TrayStack>
          <TrayStack $width={76}><span>13:58</span><span>2016-05-27</span></TrayStack>
        </Tray>
      </Taskbar>
    </Page>
  );
}
